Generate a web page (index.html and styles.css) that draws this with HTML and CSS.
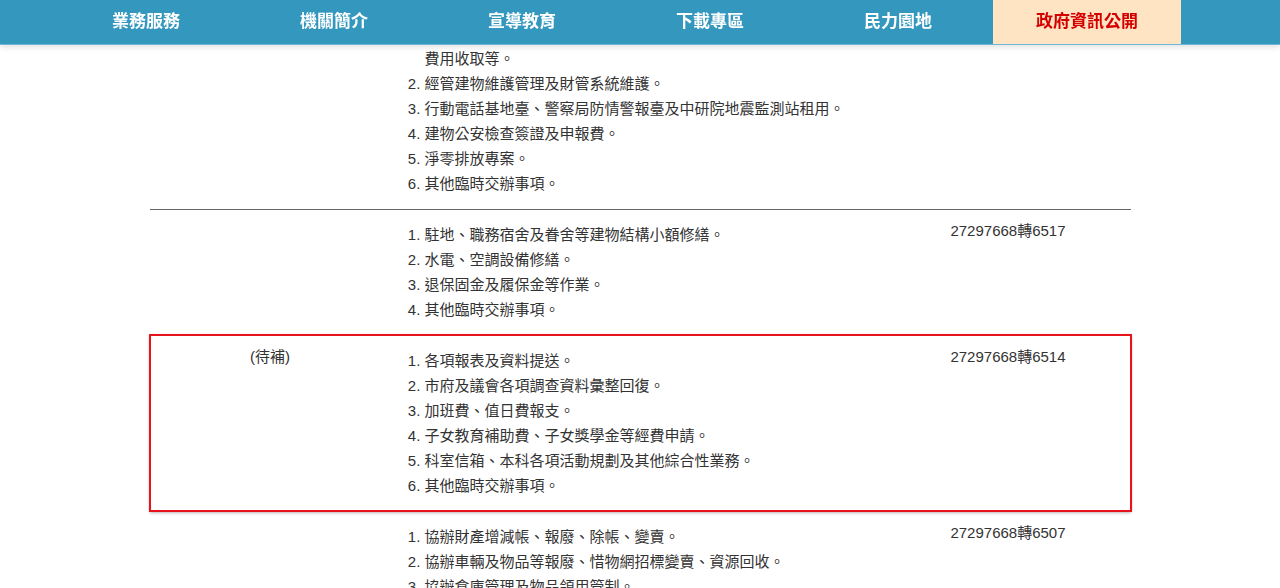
FILE: index.html
```html
<!DOCTYPE html>
<html lang="zh-Hant">
<head>
    <meta charset="UTF-8">
    <meta name="viewport" content="width=device-width, initial-scale=1.0">
    <title>業務職掌</title>
    <link rel="stylesheet" href="styles.css">
</head>
<body>
    <header class="topbar">
        <ul class="nav">
            <li><a href="#">業務服務</a></li>
            <li><a href="#">機關簡介</a></li>
            <li><a href="#">宣導教育</a></li>
            <li><a href="#">下載專區</a></li>
            <li><a href="#">民力園地</a></li>
            <li class="active"><a href="#">政府資訊公開</a></li>
        </ul>
    </header>

    <main class="duties">
        <div class="row">
            <div class="name">(待補)</div>
            <ol class="tasks">
                <li>營舍及眷舍管理、宿舍借用、收回及宿舍管理費、水電<br>費用收取等。</li>
                <li>經管建物維護管理及財管系統維護。</li>
                <li>行動電話基地臺、警察局防情警報臺及中研院地震監測站租用。</li>
                <li>建物公安檢查簽證及申報費。</li>
                <li>淨零排放專案。</li>
                <li>其他臨時交辦事項。</li>
            </ol>
            <div class="phone">27297668轉6516</div>
        </div>

        <div class="row">
            <div class="name"></div>
            <ol class="tasks">
                <li>駐地、職務宿舍及眷舍等建物結構小額修繕。</li>
                <li>水電、空調設備修繕。</li>
                <li>退保固金及履保金等作業。</li>
                <li>其他臨時交辦事項。</li>
            </ol>
            <div class="phone">27297668轉6517</div>
        </div>

        <div class="row focus">
            <div class="name">(待補)</div>
            <ol class="tasks">
                <li>各項報表及資料提送。</li>
                <li>市府及議會各項調查資料彙整回復。</li>
                <li>加班費、值日費報支。</li>
                <li>子女教育補助費、子女獎學金等經費申請。</li>
                <li>科室信箱、本科各項活動規劃及其他綜合性業務。</li>
                <li>其他臨時交辦事項。</li>
            </ol>
            <div class="phone">27297668轉6514</div>
        </div>

        <div class="row">
            <div class="name"></div>
            <ol class="tasks">
                <li>協辦財產增減帳、報廢、除帳、變賣。</li>
                <li>協辦車輛及物品等報廢、惜物網招標變賣、資源回收。</li>
                <li>協辦倉庫管理及物品領用管制。</li>
                <li>其他臨時交辦事項。</li>
            </ol>
            <div class="phone">27297668轉6507</div>
        </div>
    </main>
</body>
</html>
```

FILE: styles.css
```css
body {
    margin: 0;
    font-family: "Liberation Sans", "Noto Sans CJK TC", sans-serif;
    font-size: 15px;
    color: #333;
    background-color: #fff;
}

/* fixed top menu */
.topbar {
    position: fixed;
    top: 0;
    left: 0;
    right: 0;
    z-index: 10;
    height: 44px;
    background-color: #3498be;
    border-bottom: 1px solid #6cb8d5;
    box-shadow: 0 2px 6px rgba(0, 0, 0, 0.12);
}
.nav {
    display: flex;
    margin: 0;
    padding: 0 0 0 52px;
    list-style: none;
}
.nav li {
    width: 188px;
    text-align: center;
}
.nav a {
    display: block;
    line-height: 44px;
    font-size: 17px;
    font-weight: bold;
    color: #fff;
    text-decoration: none;
}
.nav .active {
    margin-left: 1px;
    background-color: #ffe4c4;
}
.nav .active a {
    color: #d40000;
}

/* duty table */
.duties {
    width: 981px;
    margin: 0 auto;
    padding-top: 8px;
}
.row {
    display: grid;
    grid-template-columns: 241px 1fr 245px;
    padding-top: 9px;
    border-top: 1px solid #666;
}
.row.focus {
    outline: 2px solid #e8141c;
    outline-offset: -1px;
    box-shadow: 0 0 2px rgba(230, 0, 0, 0.6), 0 2px 3px rgba(0, 0, 0, 0.25);
}
.name, .phone {
    padding-top: 1px;
    line-height: 22px;
    text-align: center;
}
.tasks {
    margin: 3px 0 13px;
    padding-left: 34px;
    line-height: 25px;
}
```
